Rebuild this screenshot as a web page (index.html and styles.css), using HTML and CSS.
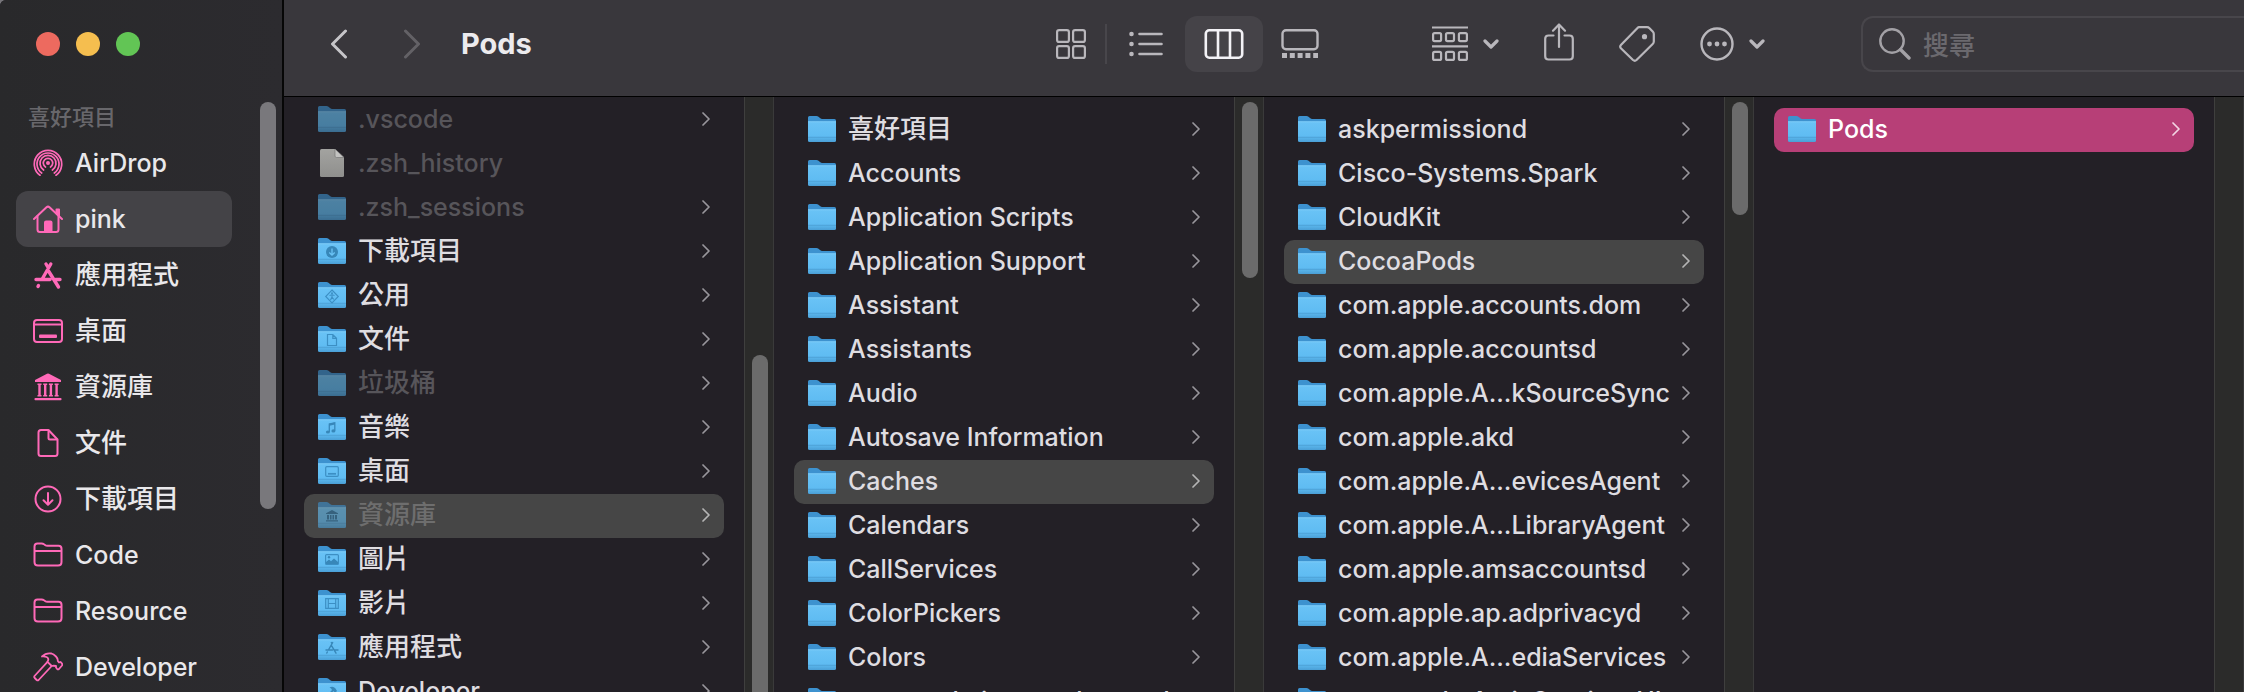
FILE: index.html
```html
<!DOCTYPE html>
<html lang="zh-Hant">
<head>
<meta charset="utf-8">
<title>Pods</title>
<link rel="stylesheet" href="styles.css">
</head>
<body>
<svg class="sprite" aria-hidden="true">
  <defs>
    <linearGradient id="front" x1="0" y1="0" x2="0" y2="1">
      <stop offset="0" stop-color="#6ac3f6"/><stop offset=".72" stop-color="#5fbcf2"/><stop offset="1" stop-color="#4a9fd6"/>
    </linearGradient>
    <linearGradient id="paper" x1="0" y1="0" x2="0" y2="1">
      <stop offset="0" stop-color="#a3a3a0"/><stop offset="1" stop-color="#8f8f8d"/>
    </linearGradient>
    <symbol id="folder" viewBox="0 0 28 26">
      <path d="M0 1.500Q0 0 1.500 0H8.500Q9.600 0 10.500.8L12 2Q13 3 14.200 3H26.500Q28 3 28 4.500V10H0Z" fill="#3d92cf"/>
      <path d="M0 5.500H28V24.500Q28 26 26.500 26H1.500Q0 26 0 24.500Z" fill="url(#front)"/>
      <path d="M0 5.800H28" stroke="#86d2fb" stroke-width=".8"/>
      <path d="M0 21.300H28" stroke="#4799cd" stroke-width=".7"/>
    </symbol>
    <symbol id="paper-file" viewBox="0 0 28 28">
      <path d="M2 1.500Q2 0 3.500 0H17L26 8.500V26.500Q26 28 24.500 28H3.500Q2 28 2 26.500Z" fill="url(#paper)"/>
      <path d="M17 0L26 8.500H18.500Q17 8.500 17 7Z" fill="#c3c3c1" stroke="#777" stroke-width=".7"/>
    </symbol>
    <symbol id="next" viewBox="0 0 8 14"><path d="M1 1L7 7L1 13" fill="none" stroke="currentColor" stroke-width="1.700" stroke-linecap="round" stroke-linejoin="round"/></symbol>
    <symbol id="down" viewBox="0 0 16 10"><path d="M2 2L8 8L14 2" fill="none" stroke="currentColor" stroke-width="3.200" stroke-linecap="round" stroke-linejoin="round"/></symbol>
    <symbol id="outline-folder" viewBox="0 0 30 30">
      <path d="M1.500 22V6.500Q1.500 3.500 4.500 3.500H8.500Q10 3.500 11 4.300L12 5Q13 5.700 14.500 5.700H25.500Q28.500 5.700 28.500 8.700V22Q28.500 25.500 25 25.500H5Q1.500 25.500 1.500 22ZM1.500 11H28.500" fill="none" stroke="currentColor" stroke-width="2"/>
    </symbol>
  </defs>
</svg>

<div class="window">
  <aside class="sidebar">
    <div class="lights">
      <button class="light close" aria-label="關閉"></button>
      <button class="light minimise" aria-label="縮到最小"></button>
      <button class="light zoom" aria-label="縮放"></button>
    </div>
    <div class="places-area">
      <nav class="places">
        <h2 class="heading">喜好項目</h2>
        <a class="place" href="#"><svg class="place-icon" viewBox="0 0 30 30" fill="none" stroke="currentColor" stroke-width="1.700" stroke-linecap="round"><circle cx="15" cy="15" r="2" fill="currentColor" stroke="none"/><path d="M12.500 19A4.700 4.700 0 1 1 17.500 19"/><path d="M10.600 22A8 8 0 1 1 19.400 22"/><path d="M8.700 25A11 11 0 1 1 21.300 25"/><path d="M7 27.200A13.700 13.700 0 1 1 23 27.200"/></svg>AirDrop</a>
        <a class="place current" href="#" aria-current="page"><svg class="place-icon" viewBox="0 0 30 30" fill="none" stroke="currentColor" stroke-width="2" stroke-linecap="round" stroke-linejoin="round"><path d="M1 15L13.500 3.300Q15 2 16.500 3.300L29 15"/><path d="M4.500 12V25.500Q4.500 28 7 28H23Q25.500 28 25.500 25.500V12"/><path d="M23.500 5.500H26V12L23.500 9.500Z" fill="currentColor"/><path d="M12 28V18.500Q12 17.500 13 17.500H17.500Q18.500 17.500 18.500 18.500V28Z" fill="currentColor"/></svg>pink</a>
        <a class="place zh" href="#"><svg class="place-icon" viewBox="0 0 30 30" fill="none" stroke="currentColor" stroke-width="3.400" stroke-linecap="round"><path d="M13 4L14.800 7M17.800 4L9.500 18.500M3 19.500H17M15.500 11L25.500 27M22.500 19.500H27M5.500 25.500L5 26.500"/></svg>應用程式</a>
        <a class="place zh" href="#"><svg class="place-icon" viewBox="0 0 30 30" fill="none" stroke="currentColor" stroke-width="2"><rect x="1" y="4" width="28" height="22" rx="3"/><path d="M1 8.500H29"/><rect x="6" y="18.500" width="18" height="3.500" rx="1" fill="currentColor" stroke="none"/></svg>桌面</a>
        <a class="place zh" href="#"><svg class="place-icon" viewBox="0 0 30 30" fill="currentColor"><path d="M15 1.500Q15.500 1.500 16 1.800L28 8V10H2V8L14 1.800Q14.500 1.500 15 1.500Z"/><path d="M4.500 11.500H8.500V13H7.700V23H8.500V24.500H4.500V23H5.300V13H4.500ZM10.200 11.500H14.200V13H13.400V23H14.200V24.500H10.200V23H11V13H10.200ZM15.900 11.500H19.900V13H19.100V23H19.900V24.500H15.900V23H16.700V13H15.900ZM21.600 11.500H25.600V13H24.800V23H25.600V24.500H21.600V23H22.400V13H21.600Z"/><rect x="1.500" y="26" width="27" height="2.200" rx=".8"/></svg>資源庫</a>
        <a class="place zh" href="#"><svg class="place-icon" viewBox="0 0 30 30" fill="none" stroke="currentColor" stroke-width="2" stroke-linejoin="round"><path d="M5.500 4.500Q5.500 2 8 2H15.500L24.500 11.500V25.500Q24.500 28 22 28H8Q5.500 28 5.500 25.500Z"/><path d="M15.500 2V10Q15.500 11.500 17 11.500H24.500"/></svg>文件</a>
        <a class="place zh" href="#"><svg class="place-icon" viewBox="0 0 30 30" fill="none" stroke="currentColor" stroke-width="2" stroke-linecap="round" stroke-linejoin="round"><circle cx="15" cy="15" r="12.500"/><path d="M15 9V20.500M10.500 16.300L15 20.800L19.500 16.300"/></svg>下載項目</a>
        <a class="place" href="#"><svg class="place-icon"><use href="#outline-folder"/></svg>Code</a>
        <a class="place" href="#"><svg class="place-icon"><use href="#outline-folder"/></svg>Resource</a>
        <a class="place" href="#"><svg class="place-icon" viewBox="0 0 30 30" fill="none" stroke="currentColor" stroke-width="1.800" stroke-linejoin="round"><path d="M14.500 9.800L1.500 24Q.8 25 1.700 26L3.700 28Q4.700 28.800 5.600 28L18.700 14"/><path d="M9 4.500Q13 .5 18.500 1.500Q20.500 2 23 4.500Q25 6.500 24.800 9L26 10.500L27.500 10Q30 12 29 13.500L26 17Q25 17.800 24 16.800L23 15.500V14Q20.500 13.500 18.700 14L14.500 9.800Q16.500 6.500 13.500 5Q11 4 9 4.500Z"/></svg>Developer</a>
      </nav>
      <div class="scroller"><div class="thumb thumb-places"></div></div>
    </div>
  </aside>

  <main class="main">
    <header class="toolbar">
      <button class="nav-button" aria-label="返回"><svg width="18" height="30" viewBox="0 0 18 30" fill="none" stroke="currentColor" stroke-width="3" stroke-linecap="round" stroke-linejoin="round"><path d="M15.500 2L2.500 15L15.500 28"/></svg></button>
      <button class="nav-button off" aria-label="前進"><svg width="18" height="30" viewBox="0 0 18 30" fill="none" stroke="currentColor" stroke-width="3" stroke-linecap="round" stroke-linejoin="round"><path d="M2.500 2L15.500 15L2.500 28"/></svg></button>
      <h1 class="title">Pods</h1>
      <div class="views">
        <button class="view view-grid" aria-label="圖像"><svg width="30" height="30" viewBox="0 0 30 30" fill="none" stroke="currentColor" stroke-width="2.200"><rect x="1.100" y="1.100" width="11.800" height="11.800" rx="2"/><rect x="17.100" y="1.100" width="11.800" height="11.800" rx="2"/><rect x="1.100" y="17.100" width="11.800" height="11.800" rx="2"/><rect x="17.100" y="17.100" width="11.800" height="11.800" rx="2"/></svg></button>
        <span class="divider"></span>
        <button class="view" aria-label="列表"><svg width="34" height="26" viewBox="0 0 34 26" fill="none" stroke="currentColor" stroke-width="2.600" stroke-linecap="round"><path d="M10.500 3H32.500M10.500 13H32.500M10.500 23H32.500"/><g fill="currentColor" stroke="none"><circle cx="2.500" cy="3" r="2.300"/><circle cx="2.500" cy="13" r="2.300"/><circle cx="2.500" cy="23" r="2.300"/></g></svg></button>
        <button class="view chosen" aria-label="直欄" aria-pressed="true"><svg width="40" height="30" viewBox="0 0 40 30" fill="none" stroke="currentColor" stroke-width="2.600"><rect x="1.800" y="1.300" width="36.400" height="27.400" rx="3.500"/><path d="M14 1V29M26 1V29"/></svg></button>
        <button class="view view-gallery" aria-label="圖庫"><svg width="38" height="30" viewBox="0 0 38 30" fill="none" stroke="currentColor" stroke-width="2.400"><rect x="1.500" y="1.200" width="35" height="19" rx="3.500"/><path d="M1 26.500H37" stroke-width="5" stroke-dasharray="5 2.800"/></svg></button>
      </div>
      <div class="actions">
        <button class="action" aria-label="群組"><svg width="36" height="36" viewBox="0 0 36 36" fill="none" stroke="currentColor" stroke-width="2.200"><path d="M0 1.500H36M0 20.300H36"/><rect x="1.100" y="7.100" width="8" height="8" rx="1.500"/><rect x="14" y="7.100" width="8" height="8" rx="1.500"/><rect x="26.900" y="7.100" width="8" height="8" rx="1.500"/><rect x="1.100" y="25.900" width="8" height="8" rx="1.500"/><rect x="14" y="25.900" width="8" height="8" rx="1.500"/><rect x="26.900" y="25.900" width="8" height="8" rx="1.500"/></svg><svg class="drop"><use href="#down"/></svg></button>
        <button class="action share" aria-label="分享"><svg width="30" height="38" viewBox="0 0 30 38" fill="none" stroke="currentColor" stroke-width="2.200" stroke-linecap="round" stroke-linejoin="round"><path d="M9.500 12.500H4.500Q1.200 12.500 1.200 15.800V33.200Q1.200 36.500 4.500 36.500H25.500Q28.800 36.500 28.800 33.200V15.800Q28.800 12.500 25.500 12.500H20.500"/><path d="M15 24V1.700M9 7.700L15 1.500L21 7.700"/></svg></button>
        <button class="action" aria-label="標籤"><svg width="36" height="36" viewBox="0 0 36 36" fill="none" stroke="currentColor" stroke-width="2.200" stroke-linejoin="round"><path d="M20 1.200H28Q29.500 1.200 30.500 2.200L33.700 5.500Q34.800 6.600 34.800 8V15.500Q34.800 17 33.700 18L17.500 34Q15.800 35.500 14 34L1.900 22.300Q.5 20.500 1.900 19L18.500 1.900Q19.200 1.200 20 1.200Z"/><circle cx="25.500" cy="10.700" r="2.600" fill="currentColor" stroke="none"/></svg></button>
        <button class="action" aria-label="更多"><svg width="34" height="34" viewBox="0 0 34 34" fill="none" stroke="currentColor" stroke-width="2.400"><circle cx="17" cy="17" r="15.500"/><g fill="currentColor" stroke="none"><circle cx="9.500" cy="17" r="2.400"/><circle cx="17" cy="17" r="2.400"/><circle cx="24.500" cy="17" r="2.400"/></g></svg><svg class="drop"><use href="#down"/></svg></button>
      </div>
      <label class="search">
        <svg width="32" height="32" viewBox="0 0 32 32" fill="none" stroke="currentColor" stroke-width="2.400" stroke-linecap="round"><circle cx="13" cy="13" r="11.700"/><path d="M21.500 21.500L30 30" stroke-width="3.400"/></svg>
        <input class="search-input" type="search" placeholder="搜尋" aria-label="搜尋">
      </label>
    </header>

    <div class="columns">
      <section class="column">
        <div class="list list-scrolled">
          <button class="row dim"><svg class="icon"><use href="#folder"/></svg><span class="name">.vscode</span><svg class="chevron"><use href="#next"/></svg></button>
          <button class="row dim"><svg class="icon file"><use href="#paper-file"/></svg><span class="name">.zsh_history</span></button>
          <button class="row dim"><svg class="icon"><use href="#folder"/></svg><span class="name">.zsh_sessions</span><svg class="chevron"><use href="#next"/></svg></button>
          <button class="row"><svg class="icon" viewBox="0 0 28 26"><use href="#folder"/><circle cx="14" cy="14" r="6" fill="#3787b9"/><path d="M14 10.500V17M11.300 14.500L14 17.200L16.700 14.500" fill="none" stroke="#6ac3f6" stroke-width="1.300"/></svg><span class="name zh">下載項目</span><svg class="chevron"><use href="#next"/></svg></button>
          <button class="row"><svg class="icon" viewBox="0 0 28 26"><use href="#folder"/><g fill="none" stroke="#3c8fc4" stroke-width="1.100"><path d="M14 8L20.300 14.500L14 21L7.700 14.500Z"/><path d="M11.500 13.500L14 12.800L16.500 13.500M14 12.800V15L12.500 18M14 15L15.800 17.500"/></g><circle cx="14" cy="11.300" r="1" fill="#3c8fc4"/></svg><span class="name zh">公用</span><svg class="chevron"><use href="#next"/></svg></button>
          <button class="row"><svg class="icon" viewBox="0 0 28 26"><use href="#folder"/><path d="M9.500 8.500H14.800L18.500 12.300V19.500H9.500ZM14.800 8.500V12.300H18.500" fill="none" stroke="#3c8fc4" stroke-width="1.200"/></svg><span class="name zh">文件</span><svg class="chevron"><use href="#next"/></svg></button>
          <button class="row dim"><svg class="icon"><use href="#folder"/></svg><span class="name zh">垃圾桶</span><svg class="chevron"><use href="#next"/></svg></button>
          <button class="row"><svg class="icon" viewBox="0 0 28 26"><use href="#folder"/><path d="M11.300 18V10L16.800 8.800V16.800" fill="none" stroke="#3787b9" stroke-width="1.300"/><path d="M11.300 10.800L16.800 9.600" stroke="#3787b9" stroke-width="2"/><ellipse cx="9.900" cy="18" rx="2" ry="1.600" fill="#3787b9"/><ellipse cx="15.400" cy="16.900" rx="2" ry="1.600" fill="#3787b9"/></svg><span class="name zh">音樂</span><svg class="chevron"><use href="#next"/></svg></button>
          <button class="row"><svg class="icon" viewBox="0 0 28 26"><use href="#folder"/><rect x="7.700" y="8.700" width="12.600" height="9.600" rx="1" fill="none" stroke="#3c8fc4" stroke-width="1.200"/><path d="M10 15.800H18" stroke="#3c8fc4" stroke-width="1.700"/></svg><span class="name zh">桌面</span><svg class="chevron"><use href="#next"/></svg></button>
          <button class="row dim selected"><svg class="icon" viewBox="0 0 28 26"><use href="#folder"/><path d="M14 8L20 11.200V12H8V11.200ZM9 13H11V17.500H9ZM12 13H13.500V17.500H12ZM14.500 13H16V17.500H14.500ZM17 13H19V17.500H17ZM8 18.300H20V19.500H8Z" fill="#2c74a3"/></svg><span class="name zh">資源庫</span><svg class="chevron"><use href="#next"/></svg></button>
          <button class="row"><svg class="icon" viewBox="0 0 28 26"><use href="#folder"/><rect x="7.600" y="8.600" width="12.800" height="9.800" rx="1" fill="none" stroke="#3c8fc4" stroke-width="1.200"/><path d="M8 18V16L11 13.500L13 15.200L16 12.500L20 16V18Z" fill="#3787b9"/><circle cx="11" cy="11.300" r="1.200" fill="#3787b9"/></svg><span class="name zh">圖片</span><svg class="chevron"><use href="#next"/></svg></button>
          <button class="row"><svg class="icon" viewBox="0 0 28 26"><use href="#folder"/><path d="M7.700 8.700H20.300V18.300H7.700ZM10.300 8.700V18.300M17.700 8.700V18.300M10.300 13.500H17.700" fill="none" stroke="#3c8fc4" stroke-width="1.200"/></svg><span class="name zh">影片</span><svg class="chevron"><use href="#next"/></svg></button>
          <button class="row"><svg class="icon" viewBox="0 0 28 26"><use href="#folder"/><path d="M13.300 8.500L14 9.700M14.700 8.500L10.500 15.800M8 16H14.500M13.500 11.700L18 19.200M17.200 16H20M9.300 18L8.800 19" fill="none" stroke="#3787b9" stroke-width="1.400" stroke-linecap="round"/></svg><span class="name zh">應用程式</span><svg class="chevron"><use href="#next"/></svg></button>
          <button class="row"><svg class="icon" viewBox="0 0 28 26"><use href="#folder"/><path d="M11.500 9.500Q15 7.500 17.500 10.500L19 13L17 15L15.500 13L10 19.500L8.500 18L14 12Q13.500 10 11.500 9.500Z" fill="#3787b9"/></svg><span class="name">Developer</span><svg class="chevron"><use href="#next"/></svg></button>
        </div>
        <div class="scroller track"><div class="thumb thumb-home"></div></div>
      </section>

      <section class="column">
        <div class="list">
          <button class="row"><svg class="icon"><use href="#folder"/></svg><span class="name zh">喜好項目</span><svg class="chevron"><use href="#next"/></svg></button>
          <button class="row"><svg class="icon"><use href="#folder"/></svg><span class="name">Accounts</span><svg class="chevron"><use href="#next"/></svg></button>
          <button class="row"><svg class="icon"><use href="#folder"/></svg><span class="name">Application Scripts</span><svg class="chevron"><use href="#next"/></svg></button>
          <button class="row"><svg class="icon"><use href="#folder"/></svg><span class="name">Application Support</span><svg class="chevron"><use href="#next"/></svg></button>
          <button class="row"><svg class="icon"><use href="#folder"/></svg><span class="name">Assistant</span><svg class="chevron"><use href="#next"/></svg></button>
          <button class="row"><svg class="icon"><use href="#folder"/></svg><span class="name">Assistants</span><svg class="chevron"><use href="#next"/></svg></button>
          <button class="row"><svg class="icon"><use href="#folder"/></svg><span class="name">Audio</span><svg class="chevron"><use href="#next"/></svg></button>
          <button class="row"><svg class="icon"><use href="#folder"/></svg><span class="name">Autosave Information</span><svg class="chevron"><use href="#next"/></svg></button>
          <button class="row selected"><svg class="icon"><use href="#folder"/></svg><span class="name">Caches</span><svg class="chevron"><use href="#next"/></svg></button>
          <button class="row"><svg class="icon"><use href="#folder"/></svg><span class="name">Calendars</span><svg class="chevron"><use href="#next"/></svg></button>
          <button class="row"><svg class="icon"><use href="#folder"/></svg><span class="name">CallServices</span><svg class="chevron"><use href="#next"/></svg></button>
          <button class="row"><svg class="icon"><use href="#folder"/></svg><span class="name">ColorPickers</span><svg class="chevron"><use href="#next"/></svg></button>
          <button class="row"><svg class="icon"><use href="#folder"/></svg><span class="name">Colors</span><svg class="chevron"><use href="#next"/></svg></button>
          <button class="row"><svg class="icon"><use href="#folder"/></svg><span class="name">com.apple.i...searchpartyd</span><svg class="chevron"><use href="#next"/></svg></button>
        </div>
        <div class="scroller track"><div class="thumb thumb-library"></div></div>
      </section>

      <section class="column">
        <div class="list">
          <button class="row"><svg class="icon"><use href="#folder"/></svg><span class="name">askpermissiond</span><svg class="chevron"><use href="#next"/></svg></button>
          <button class="row"><svg class="icon"><use href="#folder"/></svg><span class="name">Cisco-Systems.Spark</span><svg class="chevron"><use href="#next"/></svg></button>
          <button class="row"><svg class="icon"><use href="#folder"/></svg><span class="name">CloudKit</span><svg class="chevron"><use href="#next"/></svg></button>
          <button class="row selected"><svg class="icon"><use href="#folder"/></svg><span class="name">CocoaPods</span><svg class="chevron"><use href="#next"/></svg></button>
          <button class="row"><svg class="icon"><use href="#folder"/></svg><span class="name">com.apple.accounts.dom</span><svg class="chevron"><use href="#next"/></svg></button>
          <button class="row"><svg class="icon"><use href="#folder"/></svg><span class="name">com.apple.accountsd</span><svg class="chevron"><use href="#next"/></svg></button>
          <button class="row"><svg class="icon"><use href="#folder"/></svg><span class="name">com.apple.A...kSourceSync</span><svg class="chevron"><use href="#next"/></svg></button>
          <button class="row"><svg class="icon"><use href="#folder"/></svg><span class="name">com.apple.akd</span><svg class="chevron"><use href="#next"/></svg></button>
          <button class="row"><svg class="icon"><use href="#folder"/></svg><span class="name">com.apple.A...evicesAgent</span><svg class="chevron"><use href="#next"/></svg></button>
          <button class="row"><svg class="icon"><use href="#folder"/></svg><span class="name">com.apple.A...LibraryAgent</span><svg class="chevron"><use href="#next"/></svg></button>
          <button class="row"><svg class="icon"><use href="#folder"/></svg><span class="name">com.apple.amsaccountsd</span><svg class="chevron"><use href="#next"/></svg></button>
          <button class="row"><svg class="icon"><use href="#folder"/></svg><span class="name">com.apple.ap.adprivacyd</span><svg class="chevron"><use href="#next"/></svg></button>
          <button class="row"><svg class="icon"><use href="#folder"/></svg><span class="name">com.apple.A...ediaServices</span><svg class="chevron"><use href="#next"/></svg></button>
          <button class="row"><svg class="icon"><use href="#folder"/></svg><span class="name">com.apple.A...icServicesUI</span><svg class="chevron"><use href="#next"/></svg></button>
        </div>
        <div class="scroller track"><div class="thumb thumb-caches"></div></div>
      </section>

      <section class="column">
        <div class="list">
          <button class="row active"><svg class="icon"><use href="#folder"/></svg><span class="name">Pods</span><svg class="chevron"><use href="#next"/></svg></button>
        </div>
        <div class="scroller track"></div>
      </section>
    </div>
  </main>
</div>
</body>
</html>
```

FILE: styles.css
```css
* {
  box-sizing: border-box;
}

body {
  margin: 0;
  background: #77757a;
  color: #dfdde1;
  font-family: Inter, "Noto Sans CJK TC", sans-serif;
  font-size: 25px;
  font-weight: 500;
  line-height: 32px;
}

button,
input {
  margin: 0;
  padding: 0;
  border: 0;
  background: none;
  color: inherit;
  font: inherit;
}

svg {
  display: block;
  flex: none;
}

.sprite {
  position: absolute;
  width: 0;
  height: 0;
}

.window {
  display: flex;
  height: 100vh;
  overflow: hidden;
  border-top-left-radius: 6px;
  background: #232026;
}

/* Sidebar */

.sidebar {
  display: flex;
  flex: none;
  flex-direction: column;
  width: 284px;
  border-right: 2px solid #060606;
  background: linear-gradient(90deg, #29292b, #2c2b2f);
}

.lights {
  display: flex;
  flex: none;
  gap: 16px;
  height: 97px;
  padding: 32px 36px;
}

.light {
  width: 24px;
  height: 24px;
  border-radius: 50%;
}

.close {
  background: #ed6a5f;
}

.minimise {
  background: #f5be4f;
}

.zoom {
  background: #62c555;
}

.places-area {
  display: flex;
  flex: 1;
  min-height: 0;
}

.places {
  flex: 1;
  padding: 4px 22px 0 16px;
  overflow: hidden;
}

.heading {
  margin: 0 0 2px;
  padding-left: 12px;
  color: #68676b;
  font-size: 22px;
  font-weight: 500;
  line-height: 32px;
}

.place {
  display: flex;
  align-items: center;
  gap: 12px;
  height: 56px;
  padding-left: 17px;
  border-radius: 12px;
  color: #e9e8eb;
  text-decoration: none;
}

.zh {
  font-size: 26px;
}

.current {
  background: #444347;
}

.place-icon {
  width: 30px;
  height: 30px;
  color: #ff69b8;
}

.scroller {
  flex: none;
  width: 30px;
  padding: 5px 7px 0;
}

.sidebar .scroller {
  width: 28px;
  padding: 5px 6px 0;
}

.thumb {
  width: 16px;
  border-radius: 8px;
  background: #6b6b6b;
}

.thumb-places {
  height: 407px;
  background: #79787c;
}

/* Toolbar */

.main {
  display: flex;
  flex: 1;
  flex-direction: column;
  min-width: 0;
}

.toolbar {
  display: flex;
  flex: none;
  align-items: center;
  height: 97px;
  padding: 0 0 9px 31px;
  border-bottom: 1px solid #000;
  background: #39373c;
  color: #b9b7bc;
}

.nav-button {
  display: flex;
  justify-content: center;
  width: 48px;
  margin-right: 25px;
  color: #c6c5c9;
}

.off {
  color: #636166;
}

.title {
  flex: 1;
  margin: 0;
  color: #ecebee;
  font-size: 29px;
  font-weight: 700;
  line-height: 36px;
}

.views {
  display: flex;
  align-items: center;
}

.view {
  display: flex;
  align-items: center;
  justify-content: center;
  width: 78px;
  height: 56px;
  border-radius: 12px;
}

.view-grid {
  width: 68px;
}

.view-gallery {
  width: 74px;
}

.divider {
  width: 2px;
  height: 40px;
  background: #48464b;
}

.chosen {
  background: #454348;
  color: #f3f2f6;
}

.actions {
  display: flex;
  align-items: center;
  gap: 45px;
  padding: 0 96px 0 95px;
}

.action {
  display: flex;
  align-items: center;
  gap: 15px;
}

.share {
  padding-bottom: 4px;
}

.drop {
  width: 16px;
  height: 10px;
}

.search {
  display: flex;
  align-items: center;
  gap: 12px;
  width: 383px;
  height: 56px;
  padding-left: 16px;
  border: 2px solid #48464b;
  border-right: 0;
  border-radius: 12px 0 0 12px;
  color: #a3a1a6;
}

.search-input {
  flex: 1;
  min-width: 0;
  padding-top: 4px;
  outline: 0;
  font-size: 26px;
}

.search-input::placeholder {
  color: #6b696e;
  opacity: 1;
}

/* Columns */

.columns {
  display: flex;
  flex: 1;
  min-height: 0;
}

.column {
  display: flex;
  flex: 1;
  min-width: 0;
}

.list {
  flex: 1;
  min-width: 0;
  padding: 11px 20px 0;
  overflow: hidden;
}

.list-scrolled {
  padding-top: 1px;
}

.track {
  border-right: 1px solid #3a3a3a;
  border-left: 1px solid #3f3f3e;
  background: #2b2b2a;
}

.row {
  display: flex;
  align-items: center;
  gap: 12px;
  width: 100%;
  height: 44px;
  padding: 0 14px 2px;
  border-radius: 10px;
  text-align: left;
}

.icon {
  width: 28px;
  height: 26px;
}

.file {
  height: 28px;
}

.name {
  flex: 1;
  min-width: 0;
  overflow: hidden;
  white-space: nowrap;
}

.chevron {
  width: 8px;
  height: 14px;
  color: #98969b;
}

.dim {
  color: #57555a;
}

.dim .icon {
  opacity: .6;
}

.dim .file {
  opacity: 1;
}

.selected {
  background: #464646;
}

.selected .chevron {
  color: #b5b5b5;
}

.selected.dim {
  color: #6e6e6e;
}

.active {
  background: #b73f77;
  color: #fff;
}

.active .chevron {
  color: #f3d5e3;
}

.thumb-home {
  height: 100%;
  min-height: 40px;
  border-radius: 8px 8px 0 0;
}

.column:first-child .scroller {
  padding-top: 258px;
}

.thumb-library {
  height: 176px;
}

.thumb-caches {
  height: 113px;
}
```
